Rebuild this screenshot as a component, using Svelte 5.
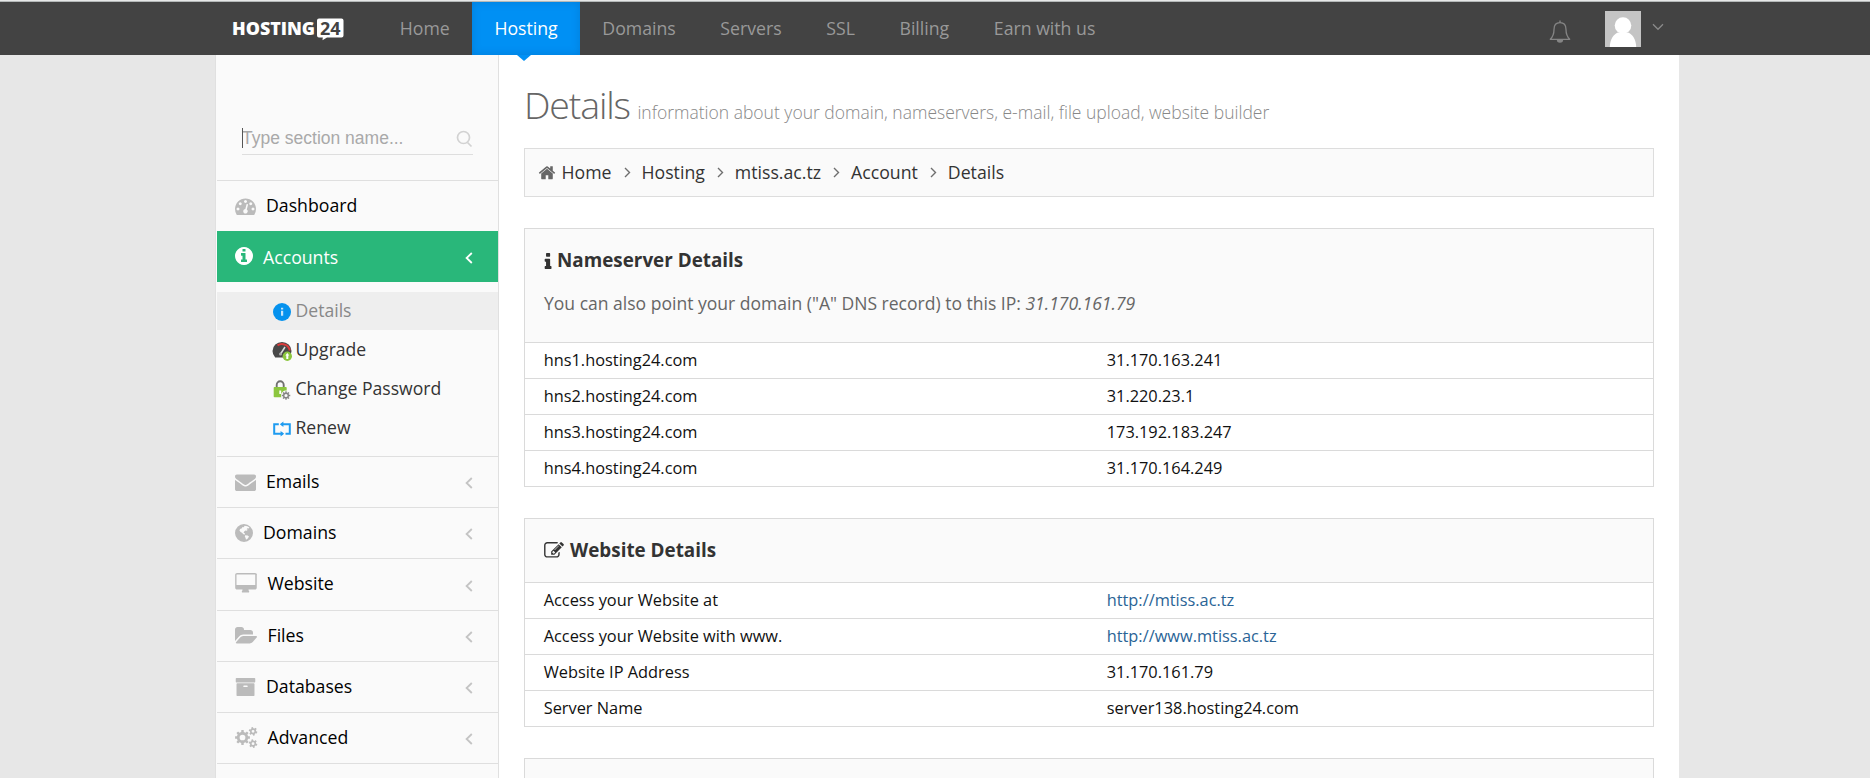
<script>
  const nav = ['Home', 'Hosting', 'Domains', 'Servers', 'SSL', 'Billing', 'Earn with us'];
  const crumbs = ['Home', 'Hosting', 'mtiss.ac.tz', 'Account', 'Details'];

  // Builds a toothed wheel with a round hole; drawn with the even-odd rule.
  function gear(cx, cy, outer, inner, hole, teeth, turn = 0) {
    const step = (Math.PI * 2) / teeth;
    const pts = [];
    for (let i = 0; i < teeth; i++) {
      const a = i * step + turn;
      for (const [r, o] of [[inner, -0.29], [outer, -0.2], [outer, 0.2], [inner, 0.29]]) {
        pts.push(`${(cx + r * Math.cos(a + o * step)).toFixed(2)} ${(cy + r * Math.sin(a + o * step)).toFixed(2)}`);
      }
    }
    return `M${pts.join('L')}Z M${cx - hole} ${cy}a${hole} ${hole} 0 1 0 ${hole * 2} 0a${hole} ${hole} 0 1 0 ${-hole * 2} 0Z`;
  }

  const cogs = gear(640, 896, 640, 490, 245, 8) + gear(1540, 370, 370, 270, 120, 6, 0.3) + gear(1540, 1420, 370, 270, 120, 6, 0.3);

  const icons = {
    gauge: { vb: '0 128 1792 1536', w: 21, h: 18, d: 'M384 1152q0-53-37.5-90.5t-90.5-37.5-90.5 37.5-37.5 90.5 37.5 90.5 90.5 37.5 90.5-37.5 37.5-90.5zm192-448q0-53-37.5-90.5t-90.5-37.5-90.5 37.5-37.5 90.5 37.5 90.5 90.5 37.5 90.5-37.5 37.5-90.5zm428 481l101-382q6-26-7.5-48.5t-38.5-29.5-48 6.5-30 39.5l-101 382q-60 5-107 43.5t-63 98.5q-20 77 20 146t117 89 146-20 89-117q16-60-6-117t-72-91zm660-33q0-53-37.5-90.5t-90.5-37.5-90.5 37.5-37.5 90.5 37.5 90.5 90.5 37.5 90.5-37.5 37.5-90.5zm-640-640q0-53-37.5-90.5t-90.5-37.5-90.5 37.5-37.5 90.5 37.5 90.5 90.5 37.5 90.5-37.5 37.5-90.5zm448 192q0-53-37.5-90.5t-90.5-37.5-90.5 37.5-37.5 90.5 37.5 90.5 90.5 37.5 90.5-37.5 37.5-90.5zm320 448q0 261-141 483-19 29-54 29h-1402q-35 0-54-29-141-221-141-483 0-182 71-348t191-286 286-191 348-71 348 71 286 191 191 286 71 348z' },
    info: { vb: '128 128 1536 1536', w: 18, h: 18, d: 'M1152 1376v-160q0-14-9-23t-23-9h-96v-512q0-14-9-23t-23-9h-320q-14 0-23 9t-9 23v160q0 14 9 23t23 9h96v320h-96q-14 0-23 9t-9 23v160q0 14 9 23t23 9h448q14 0 23-9t9-23zm-128-896v-160q0-14-9-23t-23-9h-192q-14 0-23 9t-9 23v160q0 14 9 23t23 9h192q14 0 23-9t9-23zm640 416q0 209-103 385.5t-279.5 279.5-385.5 103-385.5-103-279.5-279.5-103-385.5 103-385.5 279.5-279.5 385.5-103 385.5 103 279.5 279.5 103 385.5z' },
    mail: { vb: '0 128 1792 1536', w: 21, h: 18, d: 'M1792 710v794q0 66-47 113t-113 47h-1472q-66 0-113-47t-47-113v-794q44 49 101 87 362 246 497 345 57 42 92.5 65.5t94.5 48 110 24.5h2q51 0 110-24.5t94.5-48 92.5-65.5q170-123 498-345 57-39 100-87zm0-294q0 79-49 151t-122 123q-376 261-468 325-10 7-42.5 31t-54 38.5-52 32.5-57.5 27-50 9h-2q-23 0-50-9t-57.5-27-52-32.5-54-38.5-42.5-31q-91-64-262-182.5t-205-142.5q-62-42-117-115.5t-55-136.5q0-78 41.5-130t118.5-52h1472q65 0 112.5 47t47.5 113z' },
    globe: { vb: '0 0 18 18', w: 18, h: 18, d: 'M9 0a9 9 0 1 0 0 18a9 9 0 1 0 0-18ZM9.6 1.8L12.4 2.2L14.4 3.6L13.6 4.6L12.4 4.2L11.6 5.2L12.8 5.8L11.8 6.8L10.4 6.6L9.2 7.6L8.6 8.9L9.9 9.3L10 10.6L8.4 10.2L7 8.8L5.6 8L4.4 6.2L5.4 4.8L7 4.2L7.4 3L8.8 3.2ZM10.2 11.2L12.6 11.6L14 12.6L12.8 14.4L11 15.8L10.6 14L9.8 12.6Z' },
    desktop: { vb: '0 0 1920 1664', w: 22.5, h: 19.5, d: 'M1728 992v-832q0-13-9.5-22.5t-22.5-9.5h-1536q-13 0-22.5 9.5t-9.5 22.5v832q0 13 9.5 22.5t22.5 9.5h1536q13 0 22.5-9.5t9.5-22.5zm128-832v1088q0 66-47 113t-113 47h-544q0 37 16 77.5t32 71 16 43.5q0 26-19 45t-45 19h-512q-26 0-45-19t-19-45q0-14 16-44t32-70 16-78h-464q-66 0-113-47t-47-113v-1088q0-66 47-113t113-47h1536q66 0 113 47t47 113z' },
    folder: { vb: '0 128 1920 1536', w: 22.5, h: 18, d: 'M1879 952q0 31-31 66l-336 396q-43 51-120.5 86.5t-143.5 35.5h-1088q-34 0-60.5-13t-26.5-43q0-31 31-66l336-396q43-51 120.5-86.5t143.5-35.5h1088q34 0 60.5 13t26.5 43zm-343-344v160h-832q-94 0-197 47.5t-164 119.5l-337 396-5 6q0-4-.5-12.5t-.5-12.5v-960q0-92 66-158t158-66h320q92 0 158 66t66 158v32h544q92 0 158 66t66 158z' },
    archive: { vb: '0 128 1792 1536', w: 21, h: 18, d: 'M1088 832q0-26-19-45t-45-19h-256q-26 0-45 19t-19 45 19 45 45 19h256q26 0 45-19t19-45zm576-192v960q0 26-19 45t-45 19h-1408q-26 0-45-19t-19-45v-960q0-26 19-45t45-19h1408q26 0 45 19t19 45zm64-448v256q0 26-19 45t-45 19h-1536q-26 0-45-19t-19-45v-256q0-26 19-45t45-19h1536q26 0 45 19t19 45z' },
    cogs: { vb: '0 0 1920 1792', w: 22.5, h: 21, d: cogs }
  };

  const menu = [
    { label: 'Emails', icon: 'mail' },
    { label: 'Domains', icon: 'globe' },
    { label: 'Website', icon: 'desktop', tall: true },
    { label: 'Files', icon: 'folder' },
    { label: 'Databases', icon: 'archive' },
    { label: 'Advanced', icon: 'cogs' }
  ];

  const nameservers = [
    ['hns1.hosting24.com', '31.170.163.241'],
    ['hns2.hosting24.com', '31.220.23.1'],
    ['hns3.hosting24.com', '173.192.183.247'],
    ['hns4.hosting24.com', '31.170.164.249']
  ];
  const website = [
    ['Access your Website at', 'http://mtiss.ac.tz', true],
    ['Access your Website with www.', 'http://www.mtiss.ac.tz', true],
    ['Website IP Address', '31.170.161.79'],
    ['Server Name', 'server138.hosting24.com']
  ];
</script>

{#snippet glyph(name)}
  {@const i = icons[name]}
  <svg class="glyph" viewBox={i.vb} width={i.w} height={i.h}><path fill-rule="evenodd" d={i.d} /></svg>
{/snippet}

{#snippet arrow()}
  <svg class="arrow" width="8" height="12" viewBox="0 0 8 12"><path d="M6.8 1L1.6 6L6.8 11" /></svg>
{/snippet}

{#snippet table(rows)}
  <div class="table">
    {#each rows as [name, value, link]}
      <div class="tr">
        <span>{name}</span>
        {#if link}<a href={value}>{value}</a>{:else}<span>{value}</span>{/if}
      </div>
    {/each}
  </div>
{/snippet}

<div class="page">
  <header>
    <div class="bar">
      <svg class="logo" width="113" height="24" viewBox="0 0 113 24">
        <text x="0" y="18" textLength="83" lengthAdjust="spacingAndGlyphs" class="brand">HOSTING</text>
        <path fill="#fff" d="M87 1.5h22.500a2 2 0 0 1 2 2v15a2 2 0 0 1-2 2H95l-4.500 2.800l.3-2.800H87a2 2 0 0 1-2-2v-15a2 2 0 0 1 2-2Z" />
        <text x="88" y="17.500" textLength="20.500" lengthAdjust="spacingAndGlyphs" class="num">24</text>
      </svg>
      <nav>
        {#each nav as item, n}
          <a href="#top" class:active={n === 1}>{item}</a>
        {/each}
      </nav>
      <div class="user">
        <svg class="bell" width="22" height="24" viewBox="0 0 22 24">
          <path d="M11 2.700C7 2.700 5 5.500 5 9.500C5 14.500 3.600 17 1.300 19.300H20.700C18.400 17 17 14.500 17 9.500C17 5.500 15 2.700 11 2.700Z" fill="none" stroke="#858585" stroke-width="1.300" stroke-linejoin="round" />
          <path d="M10.300.5h1.400v2.200h-1.400Z M7.800 19.500h6.400a3.200 3.300 0 0 1-6.400 0Z" fill="#858585" />
        </svg>
        <svg class="avatar" width="36" height="36" viewBox="0 0 36 36">
          <rect width="36" height="36" fill="#c4c4c4" />
          <circle cx="18" cy="14.500" r="8.300" fill="#fff" />
          <path d="M4.800 36C5 28 8.500 23.500 13 21.500H23C27.500 23.500 31 28 31.200 36Z" fill="#fff" />
        </svg>
        <svg width="12" height="8" viewBox="0 0 12 8"><path d="M1 1.300L6 6.300L11 1.300" fill="none" stroke="#8a8a8a" stroke-width="1.300" /></svg>
      </div>
    </div>
  </header>

  <div class="body">
    <aside>
      <div class="search">
        <span>Type section name...</span>
        <svg width="17" height="18" viewBox="0 0 17 18"><circle cx="7.500" cy="7.500" r="6" /><path d="M11.500 12.500L15.500 16.500" /></svg>
      </div>
      <div class="item first">{@render glyph('gauge')}<span>Dashboard</span></div>
      <div class="item open">{@render glyph('info')}<span>Accounts</span>{@render arrow()}</div>
      <div class="sub">
        <div class="current">
          <svg width="20" height="20" viewBox="0 0 20 20"><circle cx="10" cy="10" r="9" fill="#0592ee" /><path d="M9 5.800h2.200v1.700H9Z M9 8.800h2.200v5H9Z" fill="#c4e5fb" /></svg>
          <span>Details</span>
        </div>
        <div>
          <svg width="20" height="20" viewBox="0 0 20 20">
            <path d="M3.200 16.500A9.500 9.200 0 1 1 16.800 16.500Z" fill="#484848" />
            <path d="M5.500 4.300A8 8 0 0 1 17.800 9.500" fill="none" stroke="#dc3c3c" stroke-width="2" />
            <path d="M8.500 13L13 6" stroke="#ddd" stroke-width="1.500" /><circle cx="8.500" cy="13" r="1.500" fill="#aaa" />
            <circle cx="15.300" cy="15.300" r="4.700" fill="#8cc63f" /><path d="M15.300 12L17.300 14.600H16.300V18H14.300V14.600H13.300Z" fill="#fff" />
          </svg>
          <span>Upgrade</span>
        </div>
        <div>
          <svg width="20" height="20" viewBox="0 0 20 20">
            <path d="M4.700 8V5A3.500 3.700 0 0 1 11.700 5V8" fill="none" stroke="#707070" stroke-width="1.900" />
            <rect x="1.700" y="7" width="13" height="10.300" rx=".8" fill="#8cc63f" /><path d="M7.300 10.500h1.900v3.500H7.300Z" fill="#fff" />
            <circle cx="14" cy="15.500" r="5" fill="#fafafa" /><path d={gear(14, 15.5, 4.3, 3.1, 1.6, 8)} fill="#858585" fill-rule="evenodd" />
          </svg>
          <span>Change Password</span>
        </div>
        <div>
          <svg width="20" height="20" viewBox="0 0 20 20">
            <path d="M6.800 5.300H2.200V14.700H6.500M9.500 5.300H17.800V14.700H13.500M6 14.700H11" fill="none" stroke="#1e9bf0" stroke-width="2" />
            <path d="M7.800 5.300L11.400 2.600V8Z M12.200 14.700L8.600 12V17.400Z" fill="#1e9bf0" />
          </svg>
          <span>Renew</span>
        </div>
      </div>
      {#each menu as m}
        <div class="item" class:tall={m.tall}>{@render glyph(m.icon)}<span>{m.label}</span>{@render arrow()}</div>
      {/each}
    </aside>

    <main>
      <h1>Details <small>information about your domain, nameservers, e-mail, file upload, website builder</small></h1>
      <div class="crumbs">
        <svg class="home" width="18" height="15.500" viewBox="0 130 1792 1540"><path fill="#666" d="M1472 992v480q0 26-19 45t-45 19h-384v-384h-256v384h-384q-26 0-45-19t-19-45v-480q0-1 .5-3t.5-3l575-474 575 474q1 2 1 6zm223-69l-62 74q-8 9-21 11h-3q-13 0-21-7l-692-577-692 577q-12 8-24 7-13-2-21-11l-62-74q-8-10-7-23.500t11-21.500l719-599q32-26 76-26t76 26l244 204v-195q0-14 9-23t23-9h192q14 0 23 9t9 23v408l219 182q10 8 11 21.500t-7 23.500z" /></svg>
        {#each crumbs as c, n}
          {#if n}<svg class="sep" width="7" height="11" viewBox="0 0 7 11"><path d="M1 1L5.500 5.500L1 10" fill="none" stroke="#6e6e6e" stroke-width="1.400" /></svg>{/if}<span>{c}</span>
        {/each}
      </div>

      <section>
        <div class="head">
          <h2><svg width="7.500" height="16" viewBox="512 128 704 1408" preserveAspectRatio="none"><path d="M1216 1344v128q0 26-19 45t-45 19h-512q-26 0-45-19t-19-45v-128q0-26 19-45t45-19h64v-384h-64q-26 0-45-19t-19-45v-128q0-26 19-45t45-19h384q26 0 45 19t19 45v576h64q26 0 45 19t19 45zm-128-1152v192q0 26-19 45t-45 19h-256q-26 0-45-19t-19-45v-192q0-26 19-45t45-19h256q26 0 45 19t19 45z" /></svg>Nameserver Details</h2>
          <p>You can also point your domain ("A" DNS record) to this IP: <em>31.170.161.79</em></p>
        </div>
        {@render table(nameservers)}
      </section>

      <section>
        <div class="head">
          <h2 class="wide"><svg width="20" height="17" viewBox="0 128 1792 1536"><path d="M888 1184l116-116-152-152-116 116v56h96v96h56zm440-720q-16-16-33 1l-350 350q-17 17-1 33t33-1l350-350q17-17 1-33zm80 594v190q0 119-84.500 203.500t-203.500 84.500h-832q-119 0-203.500-84.500t-84.500-203.500v-832q0-119 84.500-203.500t203.500-84.500h832q63 0 117 25 15 7 18 23 3 17-9 29l-49 49q-14 14-32 8-23-6-45-6h-832q-66 0-113 47t-47 113v832q0 66 47 113t113 47h832q66 0 113-47t47-113v-126q0-13 9-22l64-64q15-15 35-7t20 29zm-96-738l288 288-672 672h-288v-288zm444 132l-92 92-288-288 92-92q28-28 68-28t68 28l152 152q28 28 28 68t-28 68z" /></svg>Website Details</h2>
        </div>
        {@render table(website)}
      </section>

      <section><div class="head"></div></section>
    </main>
  </div>
</div>

<style>
  :global(body) { background: #e7e7e7; }
  * { box-sizing: border-box; }
  .page { height: 778px; overflow: hidden; display: flex; flex-direction: column; font: 17.7px "Open Sans", sans-serif; color: #333; }
  a { text-decoration: none; }
  svg { flex: none; display: block; }

  header { height: 55px; flex: none; background: #434343; border-top: 1px solid #e6e8e8; box-shadow: inset 0 1px #b4b8b8; padding: 1px 191px 0 215px; }
  .bar { display: flex; height: 53px; }
  .logo { margin: 15px 45px 0 16.5px; overflow: visible; }
  .brand { font: 800 18px "Open Sans", sans-serif; fill: #fff; }
  .num { font: 700 18px "Open Sans", sans-serif; fill: #434343; }
  nav { display: flex; margin-left: -12px; }
  nav a { padding: 0 22.3px; line-height: 53px; color: #999; position: relative; white-space: nowrap; }
  nav a.active { color: #fff; background: #0090f4; box-shadow: inset 0 0 8px rgba(0, 70, 140, .25); }
  nav a.active::after { content: ''; position: absolute; top: 53px; left: 50%; margin-left: -9px; border: 7px solid transparent; border-top: 6px solid #0090f4; border-bottom: 0; z-index: 2; }
  .user { margin-left: auto; display: flex; align-items: flex-start; padding-right: 15px; }
  .bell { margin: 18px 34px 0 0; }
  .avatar { margin: 9px 11px 0 0; }
  .user svg:last-child { margin-top: 21px; }

  .body { flex: 1; display: flex; width: 1464px; margin-left: 215px; }
  aside { width: 284px; height: 723px; overflow: hidden; flex: none; background: #fafafa; border: solid #e0e0e0; border-width: 0 1px; padding-left: 1px; }
  .search { margin: 67px 25px 25px 25px; height: 33px; border-bottom: 1px solid #dedede; display: flex; justify-content: space-between; font: 17.5px/32px "Liberation Sans", Arial, sans-serif; color: #a9a9a9; position: relative; }
  .search::before { content: ''; position: absolute; left: 0; top: 6px; width: 1px; height: 20px; background: #555; }
  .search svg { margin-top: 8px; fill: none; stroke: #d2d2d2; stroke-width: 1.7; }
  .item { height: 51px; display: flex; align-items: center; gap: 10px; padding: 0 25px 0 18px; color: #000; border-bottom: 1px solid #dfdfdf; }
  .item span { padding-bottom: 2px; }
  .item .glyph { margin-bottom: 1px; }
  .first { border-top: 1px solid #dfdfdf; border-bottom: 0; }
  .open { background: #29b77a; color: #fff; border: 0; }
  .open span { padding-bottom: 0; }
  .tall { height: 52px; }
  .tall span { padding-bottom: 3px; }
  .tall .glyph { margin-bottom: 3px; }
  .glyph { fill: #bbb; }
  .open .glyph { fill: #fff; }
  .arrow { margin-left: auto; margin-top: 2px; fill: none; stroke: #c4c4c4; stroke-width: 1.8; }
  .open .arrow { stroke: #fff; }
  .sub { height: 175px; padding-top: 10px; border-bottom: 1px solid #dfdfdf; font-size: 17.6px; }
  .sub div { height: 38px; margin-bottom: 1px; padding: 0 0 1px 54.5px; display: flex; align-items: center; gap: 4px; color: #333; }
  .sub span { padding-bottom: 2px; }
  .sub svg { margin-top: 3px; }
  .sub .current { background: #eee; color: #888; }

  main { flex: 1; background: #fff; padding: 29px 25px 0; }
  h1 { margin: 0 0 23px; height: 41px; font: 300 37.5px/41px "Open Sans", sans-serif; letter-spacing: -1.15px; color: #666; display: flex; align-items: baseline; gap: 7.5px; }
  small { font-size: 17.5px; line-height: 20px; letter-spacing: 0; color: #888; white-space: nowrap; }
  .crumbs { height: 49px; border: 1px solid #ddd; background: #fafafa; display: flex; align-items: center; padding-left: 13px; }
  .crumbs span { padding-bottom: 2px; }
  .home { margin-right: 5.5px; }
  .sep { margin: 0 11px 0 12px; }
  section { margin-top: 31px; border: 1px solid #dadada; }
  .head { background: #fafafa; padding: 18px 18px 18px 19px; }
  .head:empty { height: 60px; }
  h2 { margin: 0; font: 700 18.85px/27px "Open Sans", sans-serif; display: flex; align-items: center; gap: 5.500px; }
  h2 svg { fill: #333; }
  h2.wide { gap: 6px; }
  .head p { margin: 17px 0 8px; line-height: 25px; font-size: 17.55px; color: #666; }
  .tr { height: 36px; border-top: 1px solid #dadada; display: grid; grid-template-columns: 1fr 1fr; line-height: 34px; font-size: 16.35px; color: #111; }
  .tr span:first-child { padding-left: 18.7px; }
  .tr :last-child { padding-left: 17.7px; }
  .tr a { color: #2a6496; }
</style>
